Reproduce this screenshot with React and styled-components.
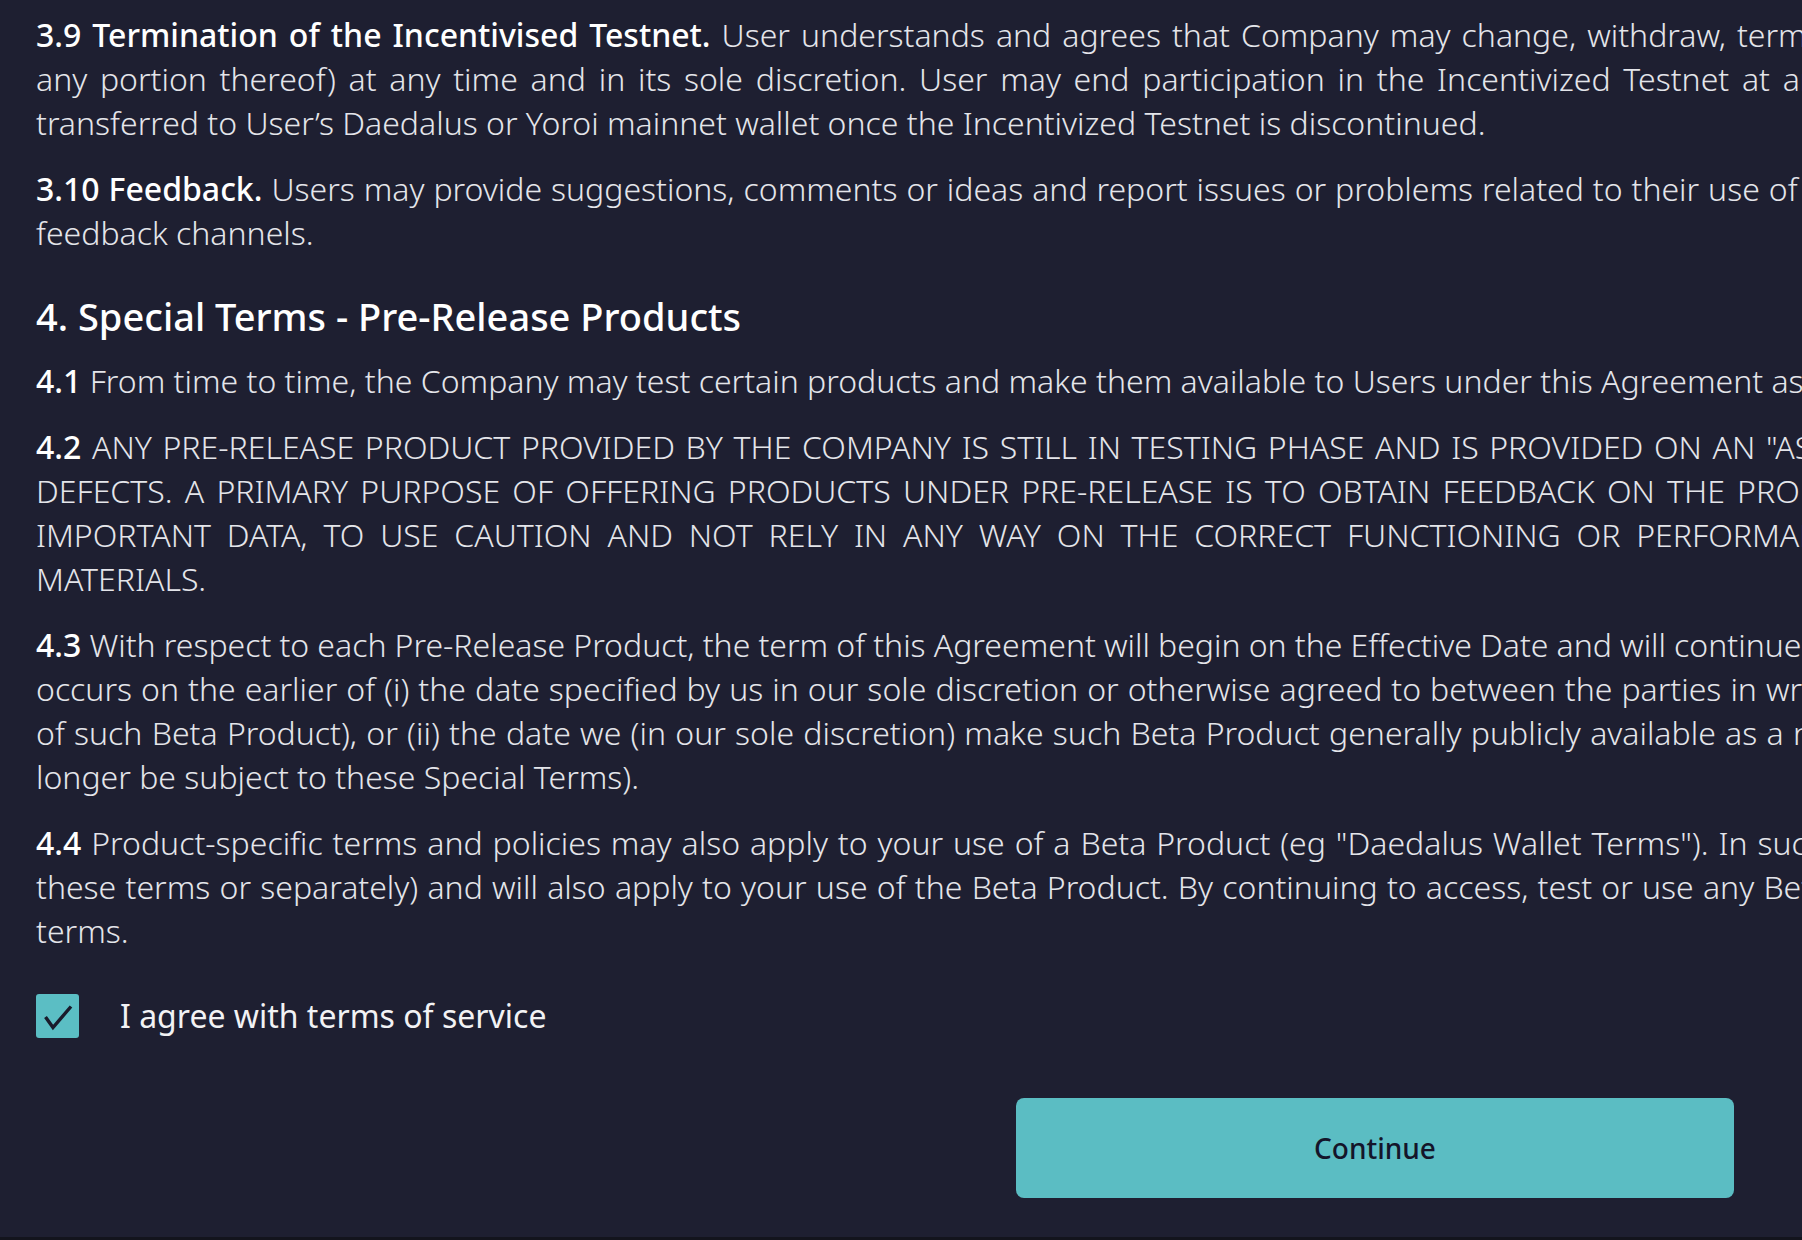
import React from "react";
import styled, { createGlobalStyle } from "styled-components";

const Global = createGlobalStyle`
  html, body { margin: 0; padding: 0; background: #1e1f31; }
  body { overflow: hidden; }
  * { box-sizing: border-box; }
`;

const Page = styled.div`
  width: 100vw;
  height: 100vh;
  overflow: hidden;
  background: #1e1f31;
  border-bottom: 3px solid #13141d;
  padding: 13px 0 0 36px;
  font-family: "Noto Sans", "DejaVu Sans", sans-serif;
`;

const Article = styled.article`
  color: #e4e5ea;
  font-size: 32px;
  font-weight: 300;
  line-height: 44px;
`;

const Para = styled.p`
  margin: 0 0 22px;
`;

/* one justified line of a paragraph; $spacing is the stretch its justification adds per space */
const Line = styled.span`
  display: block;
  white-space: nowrap;
  word-spacing: ${(p) => p.$spacing || 0}px;
`;

const B = styled.strong`
  font-weight: 500;
  color: #ffffff;
`;

const Heading = styled.h2`
  margin: 37px 0 19px;
  font-size: 38px;
  line-height: 48px;
  font-weight: 500;
  color: #ffffff;
`;

const AgreeRow = styled.label`
  display: flex;
  align-items: center;
  gap: 41px;
  margin-top: 41px;
  cursor: pointer;
`;

const Box = styled.span`
  width: 43px;
  height: 44px;
  border-radius: 3px;
  background: #5bbec4;
  display: flex;
  align-items: center;
  justify-content: center;
  flex: none;
`;

const AgreeText = styled.span`
  font-size: 32px;
  font-weight: 400;
  line-height: 44px;
  color: #f2f2f4;
`;

const ContinueButton = styled.button`
  display: flex;
  align-items: center;
  justify-content: center;
  margin: 60px 0 0 980px;
  width: 718px;
  height: 100px;
  border: none;
  border-radius: 8px;
  background: #5bbdc3;
  color: #14152a;
  font-family: "Noto Sans", "DejaVu Sans", sans-serif;
  font-size: 28px;
  font-weight: 500;
  cursor: pointer;
`;

const Check = () => (
  <svg width="43" height="44" viewBox="0 0 43 44">
    <path d="M9.5 23 L17 33.5 L35 12.5" fill="none" stroke="#1a1b2b" strokeWidth="3.4" />
  </svg>
);

const paragraphs = [
  {
    lines: [
      { b: "3.9 Termination of the Incentivised Testnet.", t: " User understands and agrees that Company may change, withdraw, terminate or suspend the Incentivized Testnet (or", s: 2.7 },
      { t: "any portion thereof) at any time and in its sole discretion. User may end participation in the Incentivized Testnet at any time and Rewards will be", s: 4.4 },
      { t: "transferred to User’s Daedalus or Yoroi mainnet wallet once the Incentivized Testnet is discontinued." },
    ],
  },
  {
    lines: [
      { b: "3.10 Feedback.", t: " Users may provide suggestions, comments or ideas and report issues or problems related to their use of the Incentivized Testnet via the designated", s: 0.6 },
      { t: "feedback channels." },
    ],
  },
  { heading: "4. Special Terms - Pre-Release Products" },
  {
    lines: [
      { b: "4.1", t: " From time to time, the Company may test certain products and make them available to Users under this Agreement as “Pre-Release Products”." },
    ],
  },
  {
    lines: [
      { b: "4.2", t: " ANY PRE-RELEASE PRODUCT PROVIDED BY THE COMPANY IS STILL IN TESTING PHASE AND IS PROVIDED ON AN \"AS IS\" BASIS AND MAY CONTAIN ERRORS AND", s: 2.3 },
      { t: "DEFECTS. A PRIMARY PURPOSE OF OFFERING PRODUCTS UNDER PRE-RELEASE IS TO OBTAIN FEEDBACK ON THE PRODUCT. USERS ARE ADVISED TO SAFEGUARD", s: 3.9 },
      { t: "IMPORTANT DATA, TO USE CAUTION AND NOT RELY IN ANY WAY ON THE CORRECT FUNCTIONING OR PERFORMANCE OF SUCH PRODUCTS OR", s: 7.5 },
      { t: "MATERIALS." },
    ],
  },
  {
    lines: [
      { b: "4.3", t: " With respect to each Pre-Release Product, the term of this Agreement will begin on the Effective Date and will continue until the Termination Date, which", s: -0.2 },
      { t: "occurs on the earlier of (i) the date specified by us in our sole discretion or otherwise agreed to between the parties in writing (including termination", s: 0.7 },
      { t: "of such Beta Product), or (ii) the date we (in our sole discretion) make such Beta Product generally publicly available as a non-Beta Product (and will no", s: 0.95 },
      { t: "longer be subject to these Special Terms)." },
    ],
  },
  {
    lines: [
      { b: "4.4", t: " Product-specific terms and policies may also apply to your use of a Beta Product (eg \"Daedalus Wallet Terms\"). In such case, those terms will be set out (within", s: 1.6 },
      { t: "these terms or separately) and will also apply to your use of the Beta Product. By continuing to access, test or use any Beta Product, you agree to such", s: 0.9 },
      { t: "terms." },
    ],
  },
];

export default function App() {
  return (
    <>
      <Global />
      <Page>
        <Article>
          {paragraphs.map((p, i) =>
            p.heading ? (
              <Heading key={i}>{p.heading}</Heading>
            ) : (
              <Para key={i}>
                {p.lines.map((l, j) => (
                  <Line key={j} $spacing={l.s}>
                    {l.b && <B>{l.b}</B>}
                    {l.t}
                  </Line>
                ))}
              </Para>
            )
          )}
          <AgreeRow>
            <Box>
              <Check />
            </Box>
            <AgreeText>I agree with terms of service</AgreeText>
          </AgreeRow>
          <ContinueButton>Continue</ContinueButton>
        </Article>
      </Page>
    </>
  );
}
